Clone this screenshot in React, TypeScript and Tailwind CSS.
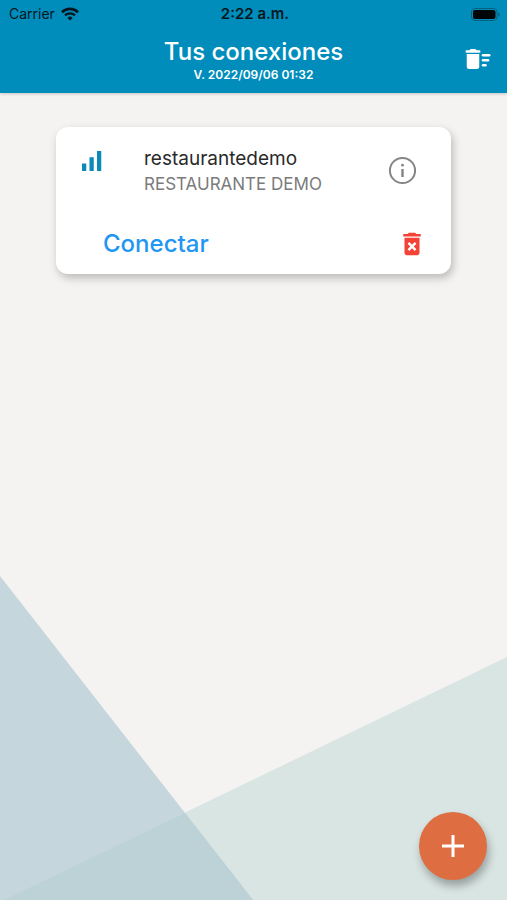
import React from "react";

function WifiIcon() {
  return (
    <svg viewBox="0 0 18 14" className="h-[14px] w-[18px]" fill="none" stroke="#06161d" aria-hidden="true">
      <path d="M1 5.2A11.4 11.4 0 0 1 17 5.2" strokeWidth="2.6" />
      <path d="M4 8.3A7.2 7.2 0 0 1 14 8.3" strokeWidth="2.3" />
      <path d="M9 13.6 6.4 10.9a3.7 3.7 0 0 1 5.2 0Z" fill="#06161d" stroke="none" />
    </svg>
  );
}

function BatteryIcon() {
  return (
    <svg viewBox="0 0 30 13" className="h-[13px] w-[30px]" aria-hidden="true">
      <rect x="0.5" y="0.5" width="25.5" height="12" rx="3.5" fill="none" stroke="#06607f" />
      <rect x="2" y="2" width="22.5" height="9" rx="2" fill="#000508" />
      <path d="M27.2 4.3v4.4c1-.4 1.6-1.2 1.6-2.2s-.6-1.8-1.6-2.2Z" fill="#06607f" />
    </svg>
  );
}

function SweepIcon() {
  return (
    <svg viewBox="0 0 24 24" className="size-[30px]" fill="#fff" aria-hidden="true">
      <path d="M3 8h10v10a2 2 0 0 1-2 2H5a2 2 0 0 1-2-2Z" />
      <path d="M3 5h2l.7-.7a1 1 0 0 1 .7-.3h3.2a1 1 0 0 1 .7.3L11 5h2a1 1 0 0 1 0 2H3a1 1 0 0 1 0-2Z" />
      <rect x="15" y="8" width="7" height="2" rx="1" />
      <rect x="15" y="12" width="6" height="2" rx="1" />
      <rect x="15" y="16" width="4" height="2" rx="1" />
    </svg>
  );
}

function SignalIcon() {
  return (
    <svg viewBox="0 0 24 24" className="size-[30px]" fill="#0a8ab8" aria-hidden="true">
      <path d="M16.800 4h3.400v16h-3.400zM4.800 14h3.400v6H4.800zM10.800 9h3.400v11h-3.400z" />
    </svg>
  );
}

function InfoIcon() {
  return (
    <svg viewBox="0 0 33 33" className="size-[33px]" fill="none" stroke="#858585" aria-hidden="true">
      <circle cx="16.5" cy="16.5" r="12.6" strokeWidth="2" />
      <path d="M16.500 15v8" strokeWidth="2.4" />
      <circle cx="16.5" cy="11.2" r="1.4" fill="#858585" stroke="none" />
    </svg>
  );
}

function DeleteIcon() {
  return (
    <svg viewBox="0 0 24 24" className="size-[30px]" fill="#f44336" aria-hidden="true">
      <path d="M6 19c0 1.1.9 2 2 2h8c1.100 0 2-.9 2-2V7H6v12zm2.460-7.120 1.410-1.410L12 12.590l2.120-2.120 1.410 1.410L13.410 14l2.120 2.120-1.410 1.410L12 15.410l-2.120 2.120-1.410-1.410L10.590 14l-2.130-2.120zM15.500 4l-1-1h-5l-1 1H5v2h14V4z" />
    </svg>
  );
}

function Backdrop() {
  return (
    <svg
      viewBox="0 0 507 324"
      preserveAspectRatio="none"
      className="pointer-events-none absolute bottom-0 left-0 h-[36%] w-full"
      aria-hidden="true"
    >
      <path d="M507 81V324H4Z" fill="#d9e5e3" />
      <path d="M0 0 253 324H0Z" fill="#c5d7dc" />
      <path d="M185 237 253 324H4Z" fill="#bdd2d6" />
    </svg>
  );
}

export default function App() {
  return (
    <div className="relative isolate flex min-h-screen flex-col bg-[#f4f3f1] font-['Inter',sans-serif]">
      <div className="absolute inset-0 -z-10">
        <Backdrop />
      </div>

      <header className="bg-[#008dbc] pb-[11px] shadow-[0_1px_3px_rgba(0,0,0,0.2)]">
        <div className="grid h-7 grid-cols-3 items-center pr-1.5 pl-[9px] text-sm text-[#06161d]">
          <div className="flex items-center gap-1.5">
            <span>Carrier</span>
            <WifiIcon />
          </div>
          <span className="text-center text-[15px] font-semibold">2:22 a.m.</span>
          <div className="flex justify-end">
            <BatteryIcon />
          </div>
        </div>
        <div className="grid grid-cols-[48px_1fr_48px] items-center pt-2 text-white">
          <div className="col-start-2 text-center">
            <h1 className="text-2xl leading-8 font-medium">Tus conexiones</h1>
            <p className="text-xs leading-[14px] font-semibold">V. 2022/09/06 01:32</p>
          </div>
          <button type="button" aria-label="Eliminar conexiones" className="cursor-pointer justify-self-end pr-3.5">
            <SweepIcon />
          </button>
        </div>
      </header>

      <main className="flex-1 px-14 pt-[34px]">
        <article className="rounded-xl bg-white pt-[19px] pb-3.5 shadow-[2px_4px_8px_rgba(0,0,0,0.24)]">
          <div className="flex items-start pr-8 pl-5">
            <SignalIcon />
            <div className="ml-[38px] flex-1">
              <h2 className="text-[19px] leading-[26px] text-[#2a2a2a]">restaurantedemo</h2>
              <p className="text-[17px] leading-6 text-[#7b7b7b]">RESTAURANTE DEMO</p>
            </div>
            <button type="button" aria-label="Información" className="mt-2 cursor-pointer">
              <InfoIcon />
            </button>
          </div>
          <div className="mt-8 flex items-center justify-between pr-6 pl-[47px]">
            <button type="button" className="cursor-pointer text-2xl leading-8 font-medium text-[#2196f3]">
              Conectar
            </button>
            <button type="button" aria-label="Eliminar" className="cursor-pointer">
              <DeleteIcon />
            </button>
          </div>
        </article>
      </main>

      <footer className="flex justify-end p-5">
        <button
          type="button"
          aria-label="Agregar conexión"
          className="flex size-[68px] cursor-pointer items-center justify-center rounded-full bg-[#de6e41] shadow-[2px_6px_9px_rgba(0,0,0,0.3)]"
        >
          <svg viewBox="0 0 22 22" className="size-[22px]" fill="none" stroke="#fff" strokeWidth="3" aria-hidden="true">
            <path d="M11 0v22M0 11h22" />
          </svg>
        </button>
      </footer>
    </div>
  );
}
